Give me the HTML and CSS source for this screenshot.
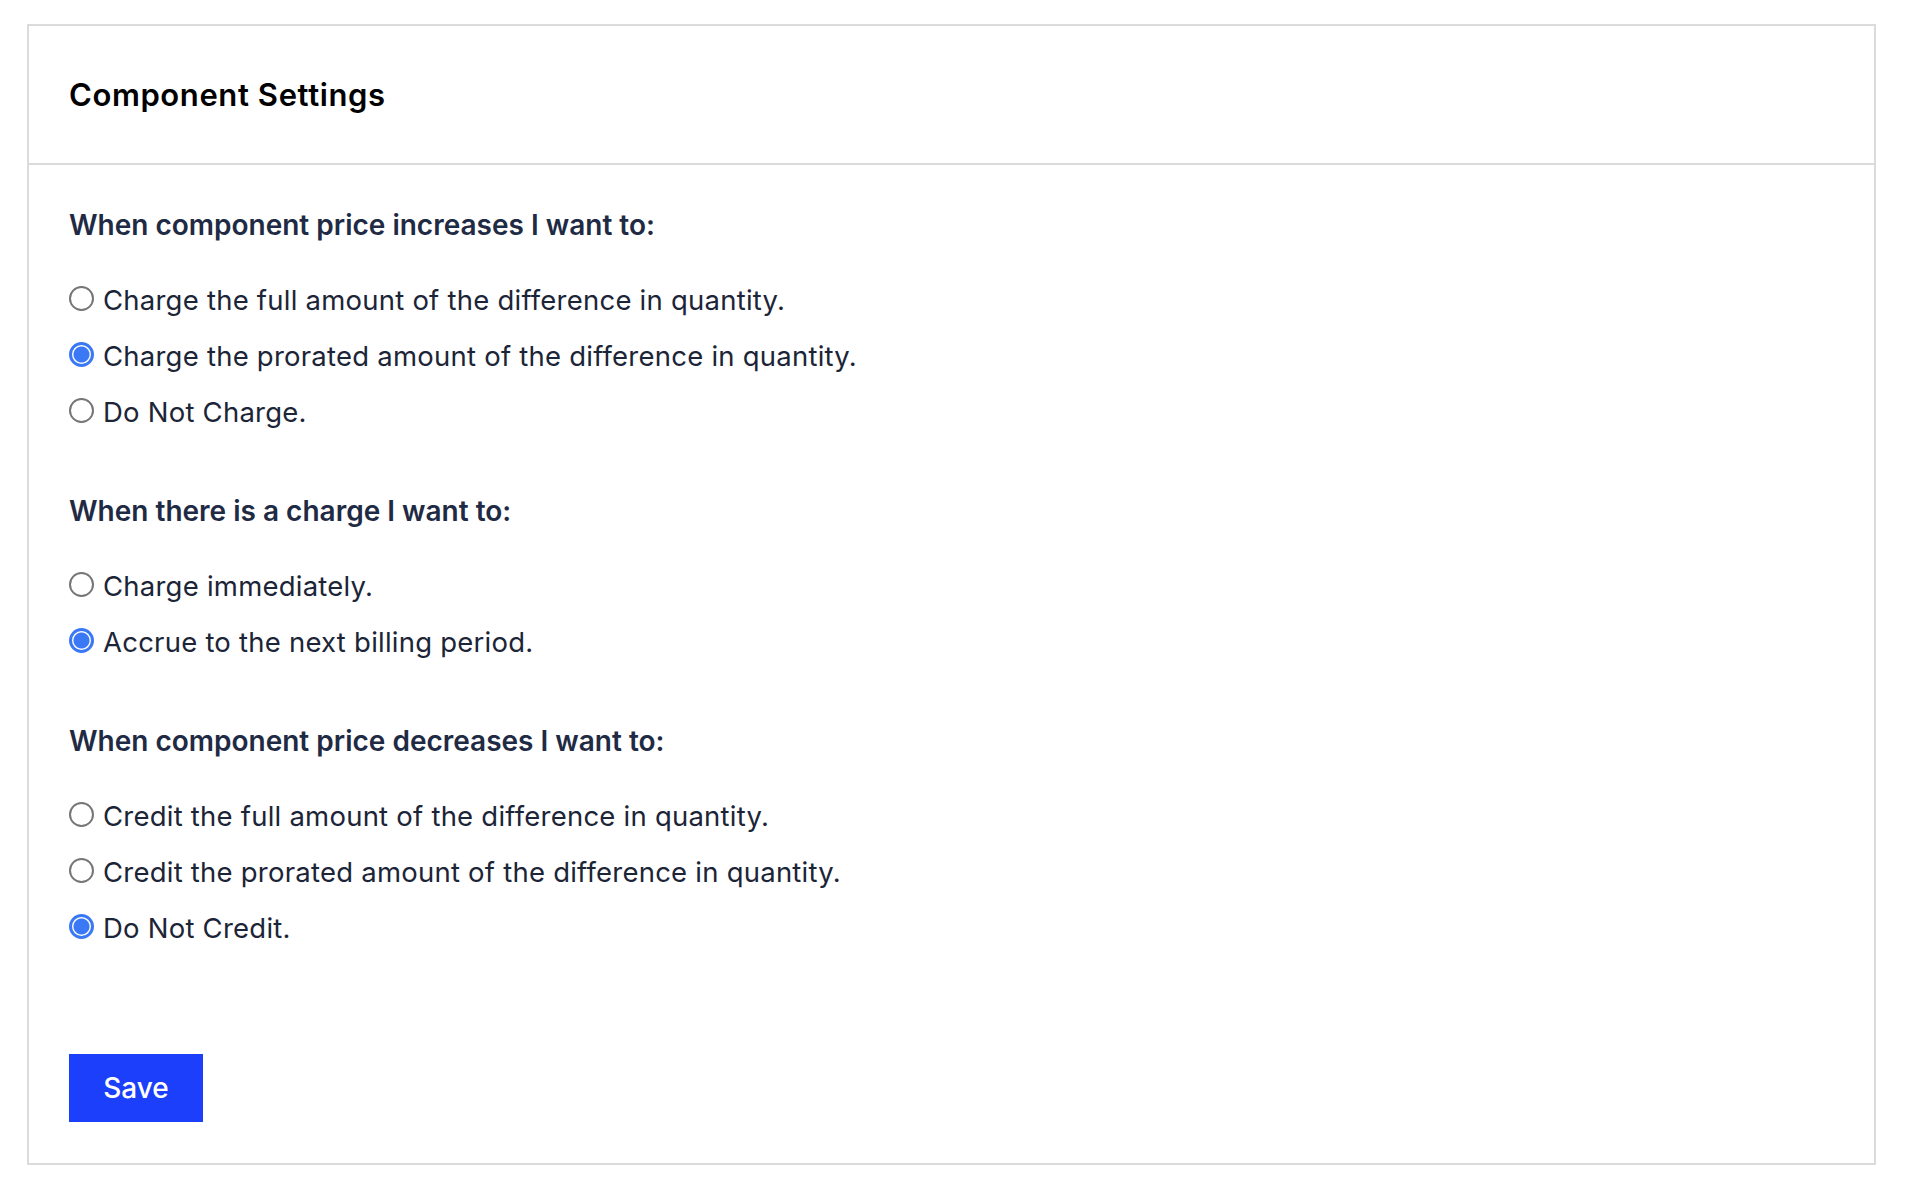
FILE: index.html
```html
<!DOCTYPE html>
<html lang="en">
<head>
<meta charset="utf-8">
<title>Component Settings</title>
<link rel="stylesheet" href="styles.css">
</head>
<body>
<div class="card">
  <div class="card-header">
    <h1 class="title">Component Settings</h1>
  </div>
  <form class="card-body">
    <div class="group">
      <h2 class="group-title">When component price increases I want to:</h2>
      <label class="option"><input type="radio" name="inc" class="radio"><span>Charge the full amount of the difference in quantity.</span></label>
      <label class="option"><input type="radio" name="inc" class="radio" checked><span>Charge the prorated amount of the difference in quantity.</span></label>
      <label class="option"><input type="radio" name="inc" class="radio"><span>Do Not Charge.</span></label>
    </div>
    <div class="group">
      <h2 class="group-title">When there is a charge I want to:</h2>
      <label class="option"><input type="radio" name="charge" class="radio"><span>Charge immediately.</span></label>
      <label class="option"><input type="radio" name="charge" class="radio" checked><span>Accrue to the next billing period.</span></label>
    </div>
    <div class="group group-last">
      <h2 class="group-title">When component price decreases I want to:</h2>
      <label class="option"><input type="radio" name="dec" class="radio"><span>Credit the full amount of the difference in quantity.</span></label>
      <label class="option"><input type="radio" name="dec" class="radio"><span>Credit the prorated amount of the difference in quantity.</span></label>
      <label class="option"><input type="radio" name="dec" class="radio" checked><span>Do Not Credit.</span></label>
    </div>
    <div class="actions">
      <button type="button" class="btn">Save</button>
    </div>
  </form>
</div>
</body>
</html>
```

FILE: styles.css
```css
html, body {
  margin: 0;
  padding: 0;
  background: #ffffff;
}
body {
  font-family: Inter, "Noto Sans", sans-serif;
  padding: 24px 0 0 27px;
}
.card {
  width: 1849px;
  box-sizing: border-box;
  border: 2px solid #dbdbdb;
  background: #fff;
}
.card-header {
  height: 137px;
  display: flex;
  align-items: center;
  padding: 0 40px;
  border-bottom: 2px solid #dbdbdb;
}
.title {
  margin: 0;
  font-size: 31px;
  font-weight: 600;
  color: #000;
  letter-spacing: 0.6px;
}
.card-body {
  display: flex;
  flex-direction: column;
  padding: 40px 40px 41px 40px;
}
.group {
  display: flex;
  flex-direction: column;
  margin-bottom: 51px;
}
.group-last {
  margin-bottom: 98px;
}
.group-title {
  margin: 0 0 27px 0;
  font-size: 28px;
  line-height: 40px;
  font-weight: 600;
  color: #1f2b44;
}
.option {
  display: flex;
  align-items: center;
  height: 56px;
  font-size: 27.5px;
  letter-spacing: 0.23px;
  color: #1c2537;
  gap: 9px;
  cursor: pointer;
}
.radio {
  appearance: none;
  -webkit-appearance: none;
  margin: 0;
  width: 25px;
  height: 25px;
  border-radius: 50%;
  border: 2px solid #767676;
  box-sizing: border-box;
  background: #fff;
  flex: none;
  position: relative;
  top: -2px;
}
.radio:checked {
  border: 3px solid #3b78f6;
  background: radial-gradient(circle, #3b78f6 0 7.5px, #fff 8.5px);
}
.actions {
  display: flex;
}
.btn {
  width: 134px;
  height: 68px;
  border: 0;
  border-radius: 0;
  background: #1c3ffb;
  color: #fff;
  font-family: Inter, "Noto Sans", sans-serif;
  font-size: 28px;
  font-weight: 500;
  cursor: pointer;
}
```
